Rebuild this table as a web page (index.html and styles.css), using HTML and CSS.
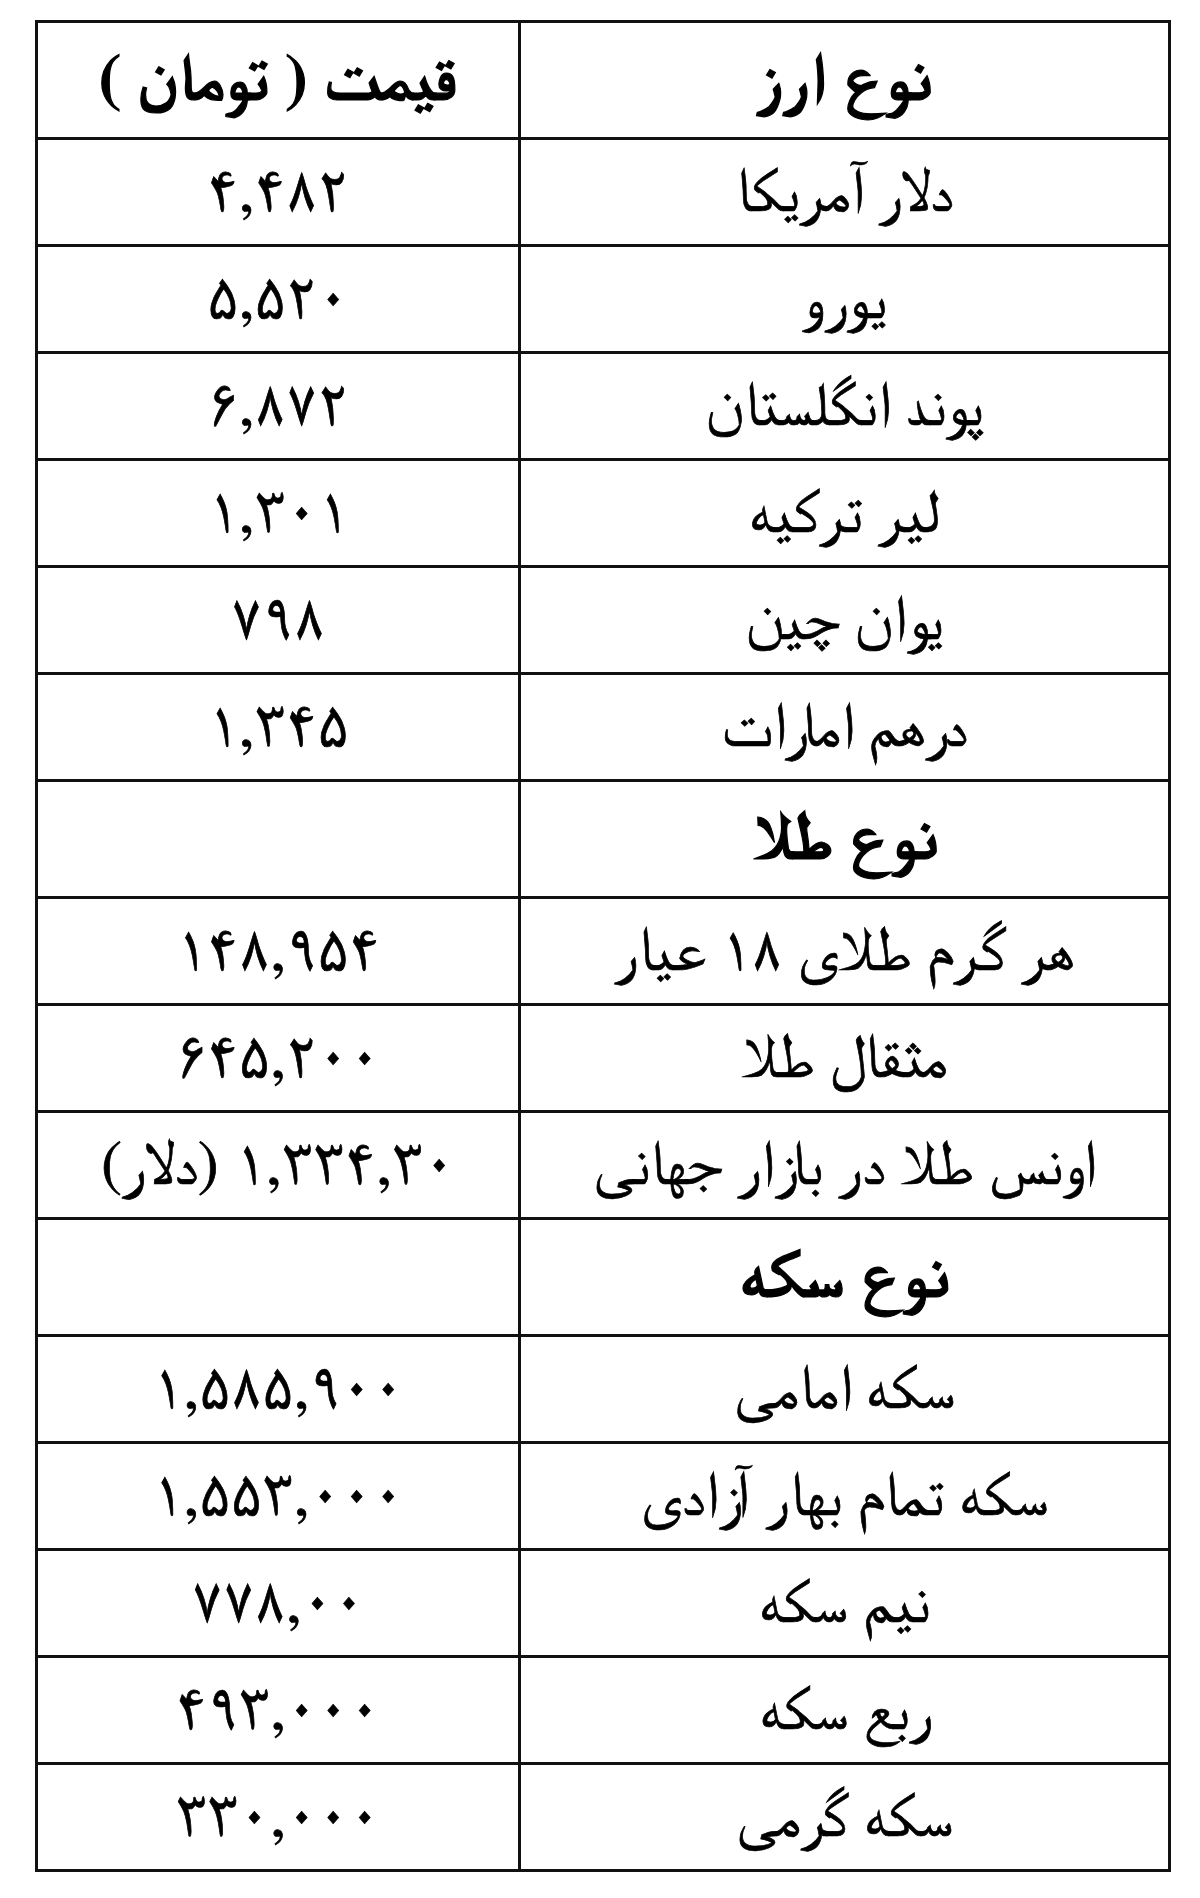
FILE: index.html
```html
<!DOCTYPE html>
<html lang="fa" dir="rtl">
<head>
<meta charset="utf-8">
<title>قیمت ارز و طلا</title>
<link rel="stylesheet" href="styles.css">
</head>
<body>
<div class="page">
<table class="rates">
<tr class="head"><th class="name">نوع ارز</th><th class="price">قیمت ( تومان )</th></tr>
<tr><td class="name">دلار آمریکا</td><td class="price">۴,۴۸۲</td></tr>
<tr><td class="name">یورو</td><td class="price">۵,۵۲۰</td></tr>
<tr><td class="name">پوند انگلستان</td><td class="price">۶,۸۷۲</td></tr>
<tr><td class="name">لیر ترکیه</td><td class="price">۱,۳۰۱</td></tr>
<tr><td class="name">یوان چین</td><td class="price">۷۹۸</td></tr>
<tr><td class="name">درهم امارات</td><td class="price">۱,۳۴۵</td></tr>
<tr class="section"><th class="name">نوع طلا</th><td class="price"></td></tr>
<tr><td class="name">هر گرم طلای ۱۸ عیار</td><td class="price">۱۴۸,۹۵۴</td></tr>
<tr><td class="name">مثقال طلا</td><td class="price">۶۴۵,۲۰۰</td></tr>
<tr><td class="name">اونس طلا در بازار جهانی</td><td class="price">۱,۳۳۴,۳۰ (دلار)</td></tr>
<tr class="section"><th class="name">نوع سکه</th><td class="price"></td></tr>
<tr><td class="name">سکه امامی</td><td class="price">۱,۵۸۵,۹۰۰</td></tr>
<tr><td class="name">سکه تمام بهار آزادی</td><td class="price">۱,۵۵۳,۰۰۰</td></tr>
<tr><td class="name">نیم سکه</td><td class="price">۷۷۸,۰۰</td></tr>
<tr><td class="name">ربع سکه</td><td class="price">۴۹۳,۰۰۰</td></tr>
<tr><td class="name">سکه گرمی</td><td class="price">۳۳۰,۰۰۰</td></tr>
</table>
</div>
</body>
</html>
```
FILE: styles.css
```css
html, body {
  margin: 0;
  padding: 0;
  background: #fff;
}
.page {
  padding: 20px 29px 0 35px;
}
.rates {
  width: 1136px;
  border-collapse: collapse;
  direction: rtl;
  color: #000;
  font-family: "FreeSerif", "DejaVu Sans", serif;
}
.rates td, .rates th {
  border: 3px solid #111;
  text-align: center;
  vertical-align: middle;
  padding: 0;
  font-size: 62px;
  line-height: 1;
  font-weight: normal;
  height: 104px;
  -webkit-text-stroke: 0.7px #000;
}
.rates th {
  font-weight: bold;
  font-size: 68px;
  -webkit-text-stroke: 1.2px #000;
}
.rates .name { width: 653px; }
.rates .price { width: 483px; font-size: 63px; }
.rates .head th, .rates .section th, .rates .section td { height: 114px; }
.rates .head .price { font-size: 66px; }
```
